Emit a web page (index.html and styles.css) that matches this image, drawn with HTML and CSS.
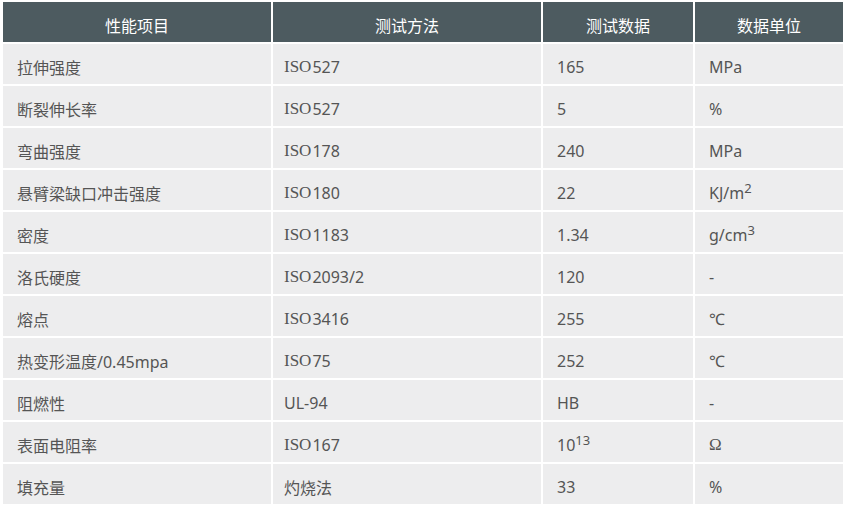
FILE: index.html
```html
<!DOCTYPE html>
<html lang="zh">
<head>
<meta charset="utf-8">
<link rel="stylesheet" href="styles.css">
</head>
<body>
<div class="table">
  <div class="th">性能项目</div><div class="th">测试方法</div><div class="th">测试数据</div><div class="th">数据单位</div>
  <div class="td">拉伸强度</div><div class="td c2"><span class="serif">ISO</span>527</div><div class="td">165</div><div class="td">MPa</div>
  <div class="td">断裂伸长率</div><div class="td c2"><span class="serif">ISO</span>527</div><div class="td">5</div><div class="td">%</div>
  <div class="td">弯曲强度</div><div class="td c2"><span class="serif">ISO</span>178</div><div class="td">240</div><div class="td">MPa</div>
  <div class="td">悬臂梁缺口冲击强度</div><div class="td c2"><span class="serif">ISO</span>180</div><div class="td">22</div><div class="td"><span>KJ/m<sup>2</sup></span></div>
  <div class="td">密度</div><div class="td c2"><span class="serif">ISO</span>1183</div><div class="td">1.34</div><div class="td"><span>g/cm<sup>3</sup></span></div>
  <div class="td">洛氏硬度</div><div class="td c2"><span class="serif">ISO</span>2093/2</div><div class="td">120</div><div class="td">-</div>
  <div class="td">熔点</div><div class="td c2"><span class="serif">ISO</span>3416</div><div class="td">255</div><div class="td">℃</div>
  <div class="td">热变形温度/0.45mpa</div><div class="td c2"><span class="serif">ISO</span>75</div><div class="td">252</div><div class="td">℃</div>
  <div class="td">阻燃性</div><div class="td c2">UL-94</div><div class="td">HB</div><div class="td">-</div>
  <div class="td">表面电阻率</div><div class="td c2"><span class="serif">ISO</span>167</div><div class="td"><span>10<sup>13</sup></span></div><div class="td"><span class="serif">Ω</span></div>
  <div class="td">填充量</div><div class="td c2">灼烧法</div><div class="td">33</div><div class="td">%</div>
</div>
</body>
</html>
```
FILE: styles.css
```css
html, body {
  margin: 0;
  padding: 0;
  background: #ffffff;
}
body {
  font-family: "Noto Sans", "Noto Sans CJK SC", sans-serif;
  font-size: 16px;
  color: #555555;
}
.table {
  display: grid;
  grid-template-columns: 268px 268px 150px 148px;
  grid-auto-rows: 40px;
  gap: 2px;
  padding: 2px 0 0 3px;
}
.th {
  background: #4d5b60;
  color: #ffffff;
  display: flex;
  align-items: center;
  justify-content: center;
  padding-top: 5px;
  box-sizing: border-box;
}
.td {
  background: #ededee;
  display: flex;
  align-items: center;
  padding: 6px 0 0 14px;
  box-sizing: border-box;
  white-space: nowrap;
}
.c2 { padding-left: 11px; }
.serif {
  font-family: "Liberation Serif", "Noto Sans CJK SC", serif;
  font-size: 17px;
  margin-right: 1px;
}
sup {
  font-size: 13px;
  line-height: 0;
  vertical-align: 6px;
}
```
